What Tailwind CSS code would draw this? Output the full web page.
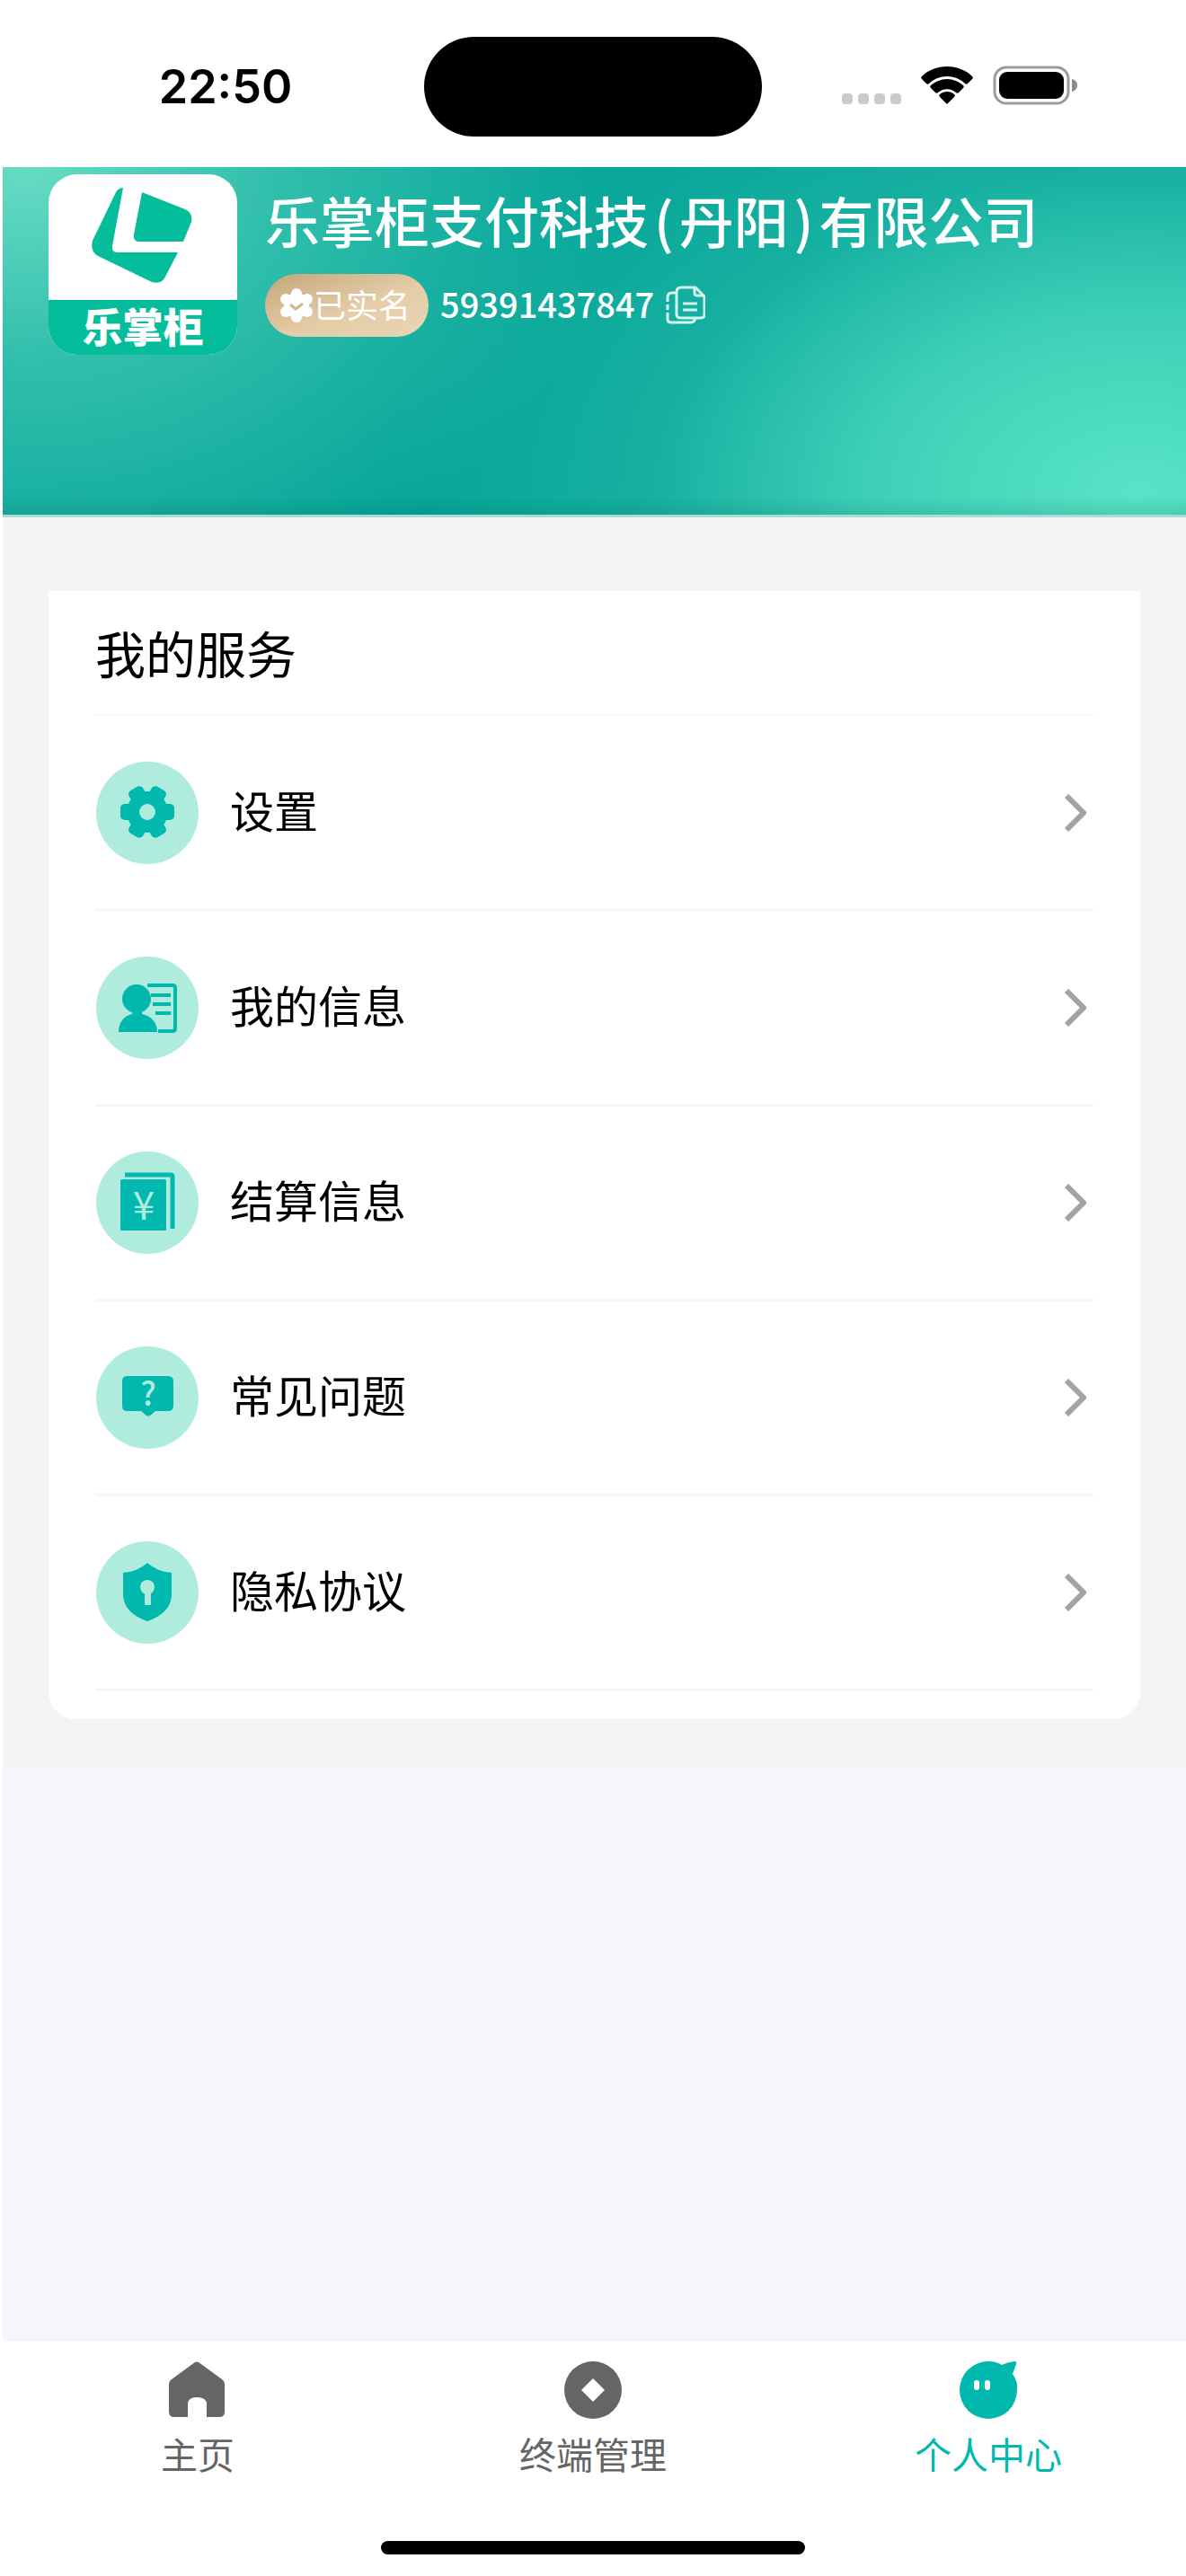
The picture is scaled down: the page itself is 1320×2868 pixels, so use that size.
<!DOCTYPE html>
<html lang="zh-CN">

<head>
    <meta charset="UTF-8">
    <meta name="viewport" content="width=device-width, initial-scale=1.0">
    <title>个人中心</title>
    <script src="https://cdn.jsdelivr.net/npm/@tailwindcss/browser@4"></script>
</head>

<body class="flex flex-col min-h-screen bg-white text-black font-['Noto_Sans_CJK_SC',sans-serif]">
    <!-- Status Bar -->
    <div class="grid grid-cols-[1fr_376px_1fr] items-center h-[186px] pt-[7px]">
        <div class="pl-[30px] text-center text-[52px] leading-[60px] font-semibold font-['Inter',sans-serif]">22:50</div>
        <div class="h-[111px] rounded-full bg-black"></div>
        <div class="flex items-center justify-center pr-[32px] pb-1">
            <svg class="w-[262px] h-[44px]" viewBox="0 0 262 44" fill="none">
                <g fill="#cbcbcb">
                    <rect x="0" y="31" width="12" height="12" rx="4" />
                    <rect x="18" y="31" width="12" height="12" rx="4" />
                    <rect x="36" y="31" width="12" height="12" rx="4" />
                    <rect x="54" y="31" width="12" height="12" rx="4" />
                </g>
                <g fill="#000">
                    <path d="M117 1c11 0 21 4 28 11 1 1 1 2 0 3l-5 5c-1 1-2 1-3 0a29 29 0 0 0-40 0c-1 1-2 1-3 0l-5-5c-1-1-1-2 0-3 7-7 17-11 28-11z" />
                    <path d="M117 15c7 0 13 3 18 7 1 1 1 2 0 3l-5 5c-1 1-2 1-3 0a15 15 0 0 0-20 0c-1 1-2 1-3 0l-5-5c-1-1-1-2 0-3 5-4 11-7 18-7z" />
                    <path d="M117 29c3 0 6 1 8 3 1 1 1 2 0 3l-7 7c-1 1-1 1-2 0l-7-7c-1-1-1-2 0-3 2-2 5-3 8-3z" />
                </g>
                <rect x="170" y="2" width="82" height="40" rx="13" stroke="#9b9b9b" stroke-width="3" />
                <rect x="175" y="7" width="72" height="30" rx="9" fill="#000" />
                <path d="M256 15c4 1 6 4 6 7s-2 6-6 7z" fill="#8c8c8c" />
            </svg>
        </div>
    </div>

    <!-- Merchant Header -->
    <header
        class="flex items-start gap-[31px] ml-[3px] h-[390px] px-[51px] pt-2 text-white border-b-[3px] border-[#a8ddd5] bg-clip-padding bg-[linear-gradient(to_top,rgba(0,80,70,0.14),transparent_20px),radial-gradient(660px_520px_at_2%_0%,#67dcc4,rgba(70,203,181,0.7)_40%,rgba(4,164,152,0)),radial-gradient(840px_560px_at_96%_94%,#58e4c6,rgba(72,216,189,0.84)_36%,rgba(40,188,169,0.5)_65%,rgba(4,164,152,0)),linear-gradient(#04a498,#04a498)]">
        <div class="flex flex-col w-[210px] h-[201px] shrink-0 overflow-hidden rounded-[32px] bg-white">
            <svg class="w-[210px] h-[140px]" viewBox="0 0 210 140" fill="#05bd9b">
                <path d="M83 15L71 80Q70 87 76 87H144L130 114Q126 123 115 120L55 91Q46 86 49 74L74 22Q77 15 83 15Z" />
                <path d="M104 20L152 39Q161 43 159 53L150 75H101Q94 75 95 67Z" />
            </svg>
            <span class="grow bg-[#05bd9b] text-center text-[45px] leading-[58px] font-black">乐掌柜</span>
        </div>
        <div class="pt-[21px]">
            <h1 class="text-[61px] leading-[60px] font-medium whitespace-nowrap">乐掌柜支付科技<span class="px-[6px]">(</span>丹阳<span class="px-[6px]">)</span>有限公司</h1>
            <div class="flex items-center mt-[30px]">
                <span class="flex items-center w-[182px] h-[70px] pl-4 rounded-full bg-linear-to-br from-[#c5a67b] via-[#e4cca7] via-55% to-[#e9d5b5]">
                    <svg class="w-[38px] h-[38px]" viewBox="0 0 38 38">
                        <g fill="#fff">
                            <circle cx="19" cy="19" r="14" />
                            <circle cx="19" cy="6" r="6" />
                            <circle cx="19" cy="32" r="6" />
                            <circle cx="7" cy="12" r="6" />
                            <circle cx="31" cy="12" r="6" />
                            <circle cx="7" cy="26" r="6" />
                            <circle cx="31" cy="26" r="6" />
                        </g>
                        <path d="M12 18l6 5 8-6" fill="none" stroke="#d3b68d" stroke-width="3" />
                    </svg>
                    <span class="pb-1 text-[36px] leading-[40px] whitespace-nowrap">已实名</span>
                </span>
                <span class="ml-[13px] pb-1 text-[38px] leading-[40px] font-medium">59391437847</span>
                <button type="button" aria-label="复制" class="ml-[13px]">
                    <svg class="w-[44px] h-[44px]" viewBox="0 0 44 44" fill="none" stroke="#d5f5ef" stroke-width="3" stroke-linejoin="round">
                        <path d="M17 2h16l10 10v20q0 4-4 4H17q-5 0-5-4V7q0-5 5-5z" />
                        <path d="M32 2v6q0 3 3 3h7" />
                        <path d="M12 8H7Q2 8 2 13v5M2 21v6M2 30v7q0 4 4 4h22q4 0 5-5" />
                        <path d="M19 20h16M19 27h16" />
                    </svg>
                </button>
            </div>
        </div>
    </header>

    <!-- Services -->
    <main class="flex flex-col grow ml-[3px] bg-[#f5f6fa]">
        <div class="bg-[#f3f4f6] px-[51px] pt-[82px] pb-14">
            <section class="bg-white rounded-b-[30px] px-[52px] pb-[31px]">
                <h2 class="flex items-center h-[140px] border-b-4 border-[#fafafa] text-[56px] leading-[60px]">我的服务</h2>

                <a href="#" class="flex items-center h-[217px] border-b-[3px] border-[#f6f6f6]">
                    <svg class="w-[116px] h-[116px] mr-[34px]" viewBox="0 0 116 116">
                        <circle cx="58" cy="58" r="57" fill="#b0ecde" />
                        <g fill="#00b8ad">
                            <circle cx="58" cy="57" r="23" />
                            <rect x="28" y="48" width="60" height="18" rx="5" />
                            <rect x="28" y="48" width="60" height="18" rx="5" transform="rotate(60 58 57)" />
                            <rect x="28" y="48" width="60" height="18" rx="5" transform="rotate(120 58 57)" />
                        </g>
                        <circle cx="58" cy="57" r="9" fill="#b0ecde" />
                    </svg>
                    <span class="grow pb-2 text-[49px] leading-[60px]">设置</span>
                    <svg class="w-6 h-[42px] mr-2" viewBox="0 0 24 42" fill="none" stroke="#a3a3a3" stroke-width="6"><path d="M2 2l19 19L2 40" /></svg>
                </a>

                <a href="#" class="flex items-center h-[217px] border-b-[3px] border-[#f6f6f6]">
                    <svg class="w-[116px] h-[116px] mr-[34px]" viewBox="0 0 116 116">
                        <circle cx="58" cy="58" r="57" fill="#b0ecde" />
                        <g fill="#00b8ad">
                            <circle cx="46" cy="48" r="16" />
                            <path d="M41 58h11v7c10 2 17 9 17 20H26c0-11 6-18 15-20z" />
                            <path d="M62 42h22v4H62zM64 52h20v4H64zM67 62h17v4H67z" />
                        </g>
                        <path d="M58 33h28q3 0 3 3v45q0 3-3 3H70" fill="none" stroke="#00b8ad" stroke-width="4" />
                    </svg>
                    <span class="grow pb-2 text-[49px] leading-[60px]">我的信息</span>
                    <svg class="w-6 h-[42px] mr-2" viewBox="0 0 24 42" fill="none" stroke="#a3a3a3" stroke-width="6"><path d="M2 2l19 19L2 40" /></svg>
                </a>

                <a href="#" class="flex items-center h-[217px] border-b-[3px] border-[#f6f6f6]">
                    <svg class="w-[116px] h-[116px] mr-[34px]" viewBox="0 0 116 116">
                        <circle cx="58" cy="58" r="57" fill="#b0ecde" />
                        <path d="M28 34q0-2 2-2h47q2 0 2 2v55H28z" fill="#00b8ad" />
                        <path d="M33 27h51q2 0 2 2v58" fill="none" stroke="#00b8ad" stroke-width="5" />
                        <text x="54" y="77" text-anchor="middle" font-size="44" fill="#b0ecde">¥</text>
                    </svg>
                    <span class="grow pb-2 text-[49px] leading-[60px]">结算信息</span>
                    <svg class="w-6 h-[42px] mr-2" viewBox="0 0 24 42" fill="none" stroke="#a3a3a3" stroke-width="6"><path d="M2 2l19 19L2 40" /></svg>
                </a>

                <a href="#" class="flex items-center h-[217px] border-b-[3px] border-[#f6f6f6]">
                    <svg class="w-[116px] h-[116px] mr-[34px]" viewBox="0 0 116 116">
                        <circle cx="58" cy="58" r="57" fill="#b0ecde" />
                        <path d="M35 34h46q6 0 6 6v27q0 6-6 6H67l-6 5q-2 1-4 0l-6-5H35q-5 0-5-6V40q0-6 5-6z" fill="#00b8ad" />
                        <text x="59" y="67" text-anchor="middle" font-size="36" font-weight="500" fill="#b0ecde">?</text>
                    </svg>
                    <span class="grow pb-2 text-[49px] leading-[60px]">常见问题</span>
                    <svg class="w-6 h-[42px] mr-2" viewBox="0 0 24 42" fill="none" stroke="#a3a3a3" stroke-width="6"><path d="M2 2l19 19L2 40" /></svg>
                </a>

                <a href="#" class="flex items-center h-[217px] border-b-[3px] border-[#f6f6f6]">
                    <svg class="w-[116px] h-[116px] mr-[34px]" viewBox="0 0 116 116">
                        <circle cx="58" cy="58" r="57" fill="#b0ecde" />
                        <path d="M58 25Q69 35 85 36V61Q84 81 58 90Q32 81 31 61V36Q47 35 58 25Z" fill="#00b8ad" />
                        <circle cx="58" cy="52" r="8" fill="#b0ecde" />
                        <rect x="55" y="54" width="7" height="18" rx="1" fill="#b0ecde" />
                    </svg>
                    <span class="grow pb-2 text-[49px] leading-[60px]">隐私协议</span>
                    <svg class="w-6 h-[42px] mr-2" viewBox="0 0 24 42" fill="none" stroke="#a3a3a3" stroke-width="6"><path d="M2 2l19 19L2 40" /></svg>
                </a>
            </section>
        </div>
    </main>

    <!-- Tab Bar -->
    <footer class="pt-[22px] pb-6">
        <nav class="grid grid-cols-3 text-[41px] leading-[40px] text-[#646566]">
            <a href="#" class="flex flex-col items-center gap-4">
                <svg class="w-[66px] h-[66px]" viewBox="0 0 66 66" fill="#646566">
                    <path d="M30 1Q32 0 34 1L60 20Q63 22 63 26V56Q63 62 57 62H43V48Q43 40 32 40Q22 40 22 48V62H7Q1 62 1 56V26Q1 22 4 20Z" />
                </svg>
                <span>主页</span>
            </a>
            <a href="#" class="flex flex-col items-center gap-4">
                <svg class="w-[66px] h-[66px]" viewBox="0 0 66 66">
                    <circle cx="33" cy="32" r="32" fill="#646566" />
                    <path d="M33 19l13 13-13 13-13-13z" fill="#fff" />
                </svg>
                <span>终端管理</span>
            </a>
            <a href="#" class="flex flex-col items-center gap-4 text-[#00b8ad]">
                <svg class="w-[66px] h-[66px]" viewBox="0 0 66 66">
                    <path d="M33 0Q42 0 48 4Q54 1 62 0Q65 0 64 3Q62 9 60 14Q66 22 65 32A32 32 0 1 1 33 0Z" fill="#00b8ad" />
                    <rect x="17" y="21" width="6" height="11" rx="3" fill="#fff" />
                    <rect x="29" y="21" width="6" height="11" rx="3" fill="#fff" />
                </svg>
                <span>个人中心</span>
            </a>
        </nav>
        <div class="mt-[78px] mx-auto w-[472px] h-[15px] rounded-full bg-black"></div>
    </footer>
</body>

</html>
